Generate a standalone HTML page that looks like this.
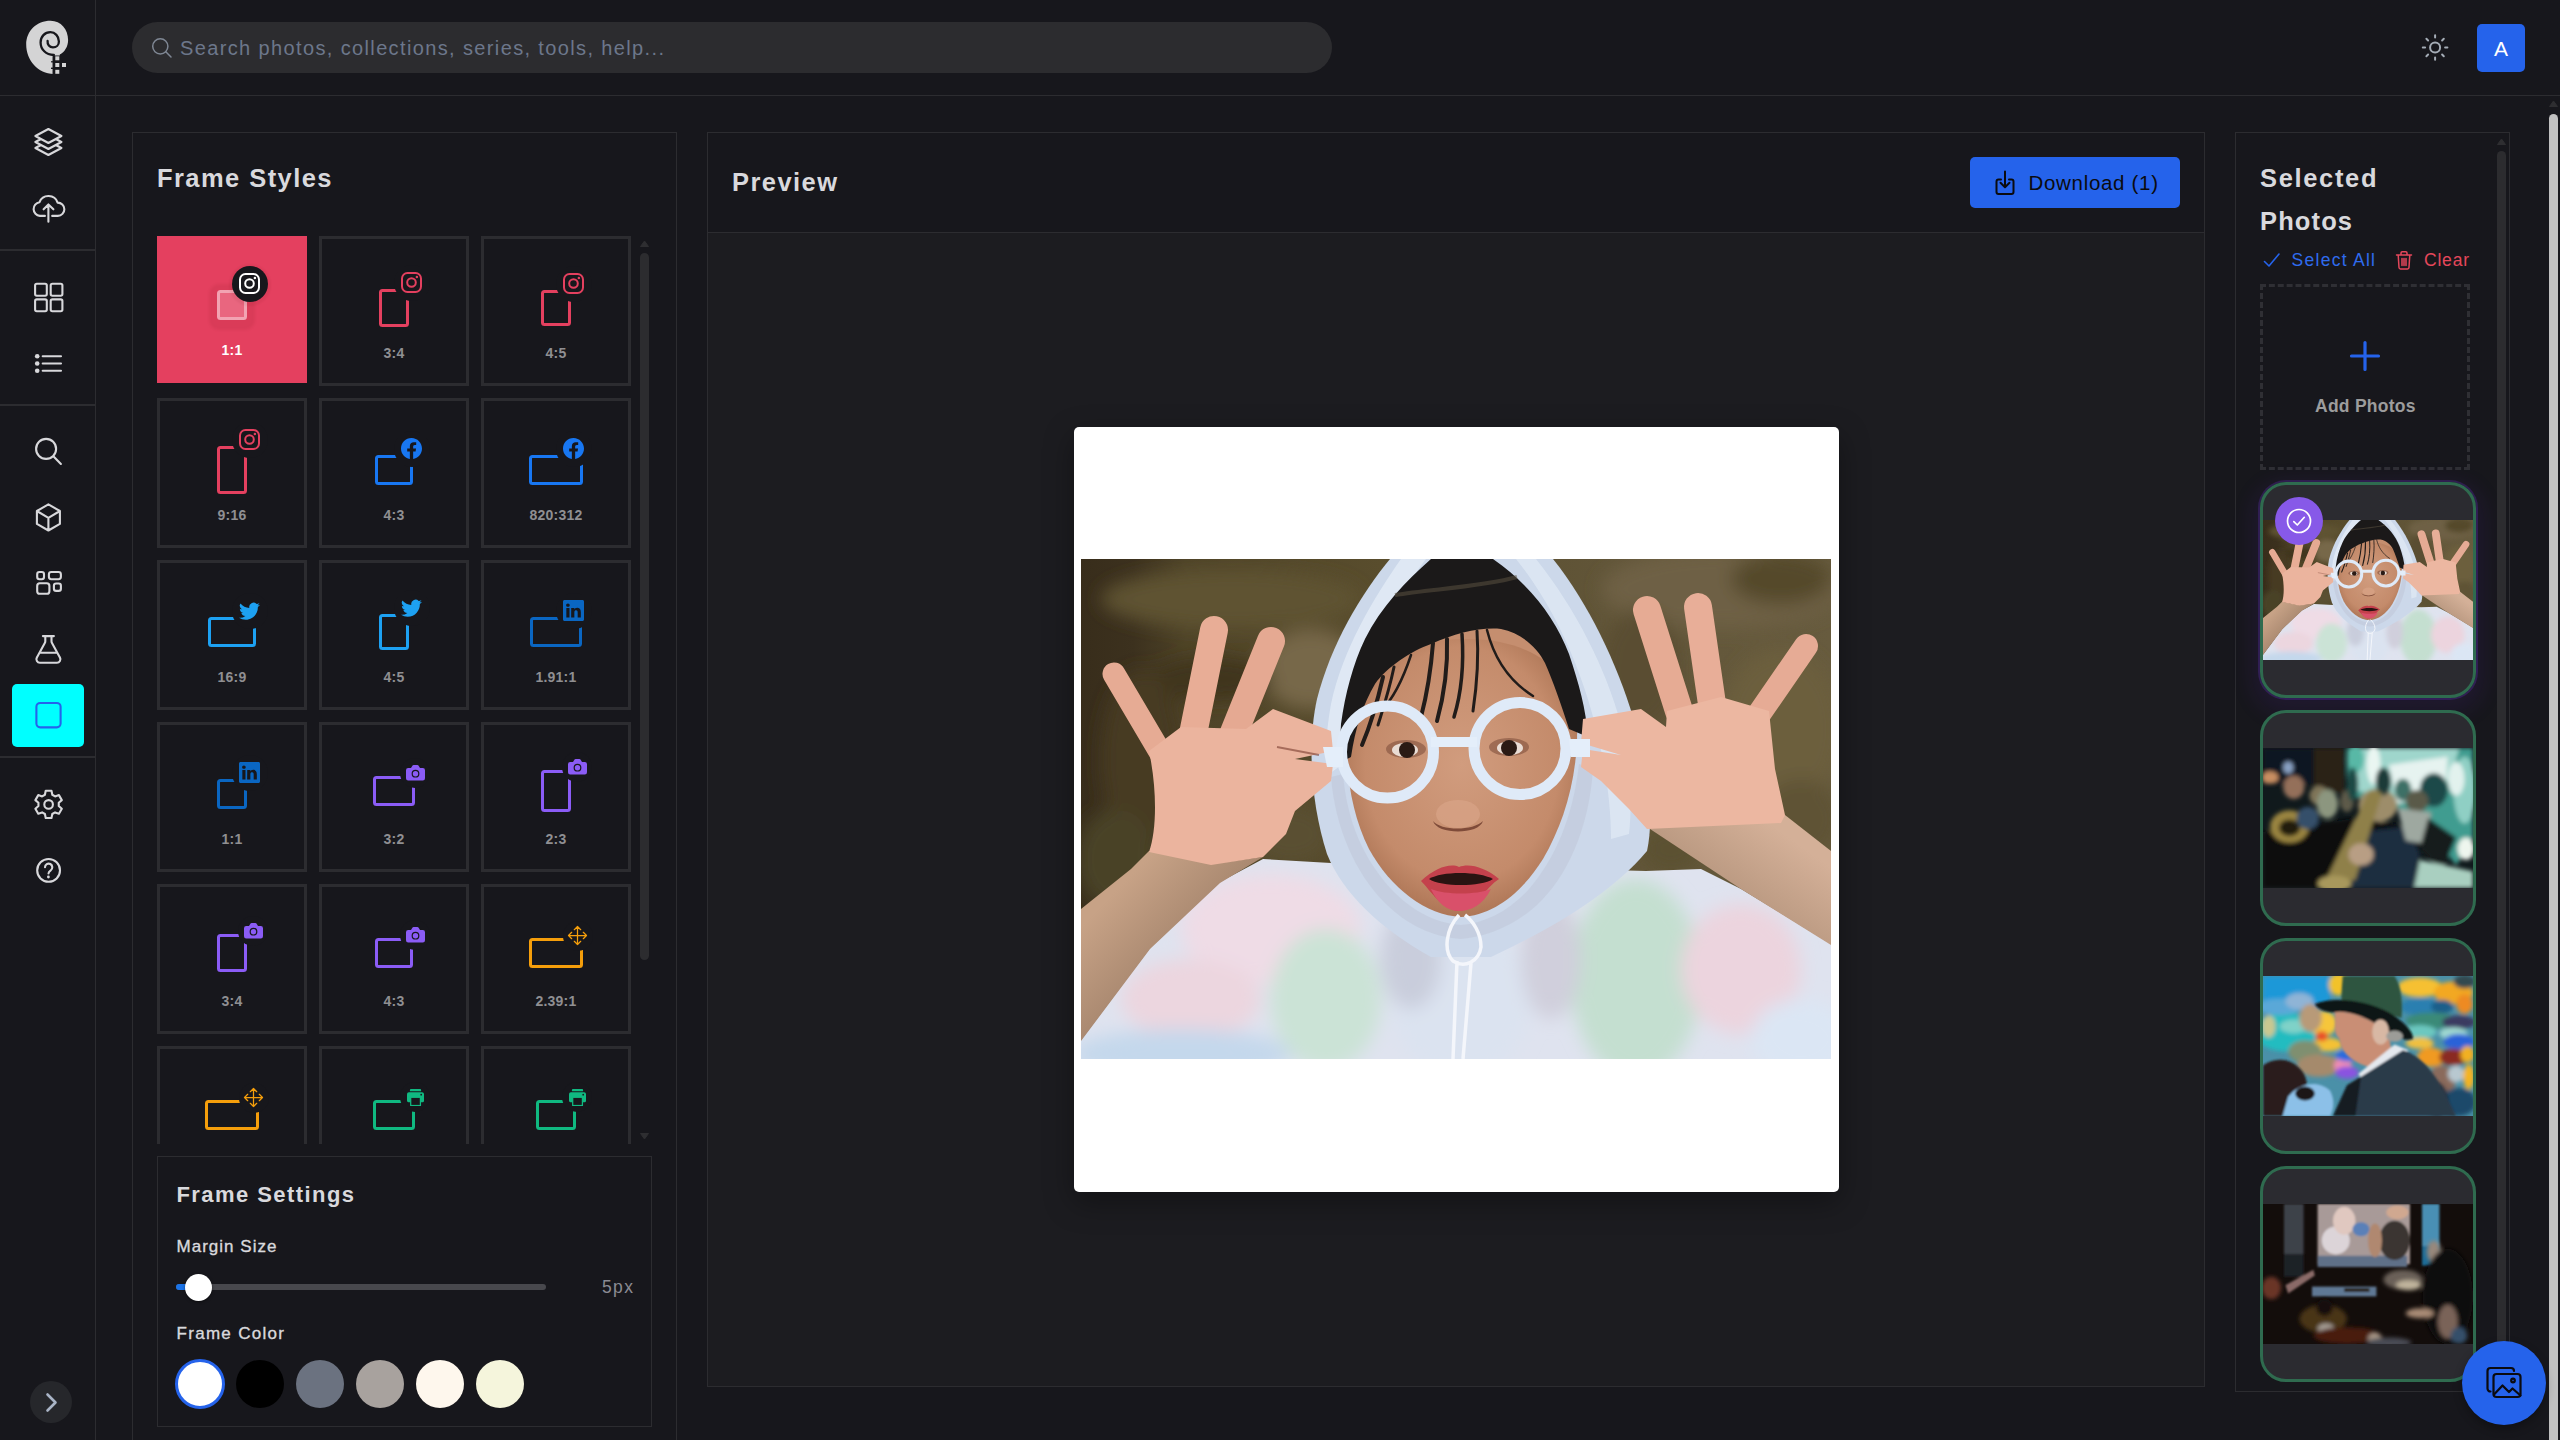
<!DOCTYPE html>
<html lang="en"><head><meta charset="utf-8"><title>Frame Styles</title><meta name="viewport" content="width=device-width, initial-scale=1"><style>
*{box-sizing:border-box;margin:0;padding:0}
html,body{width:2560px;height:1440px;overflow:hidden;background:#17171c}
body{font-family:"Liberation Sans",sans-serif;position:relative}
@media (max-width:1600px){html{zoom:.5}}
#root{position:absolute;left:0;top:0;width:2560px;height:1440px;overflow:hidden;background:#17171c}
#root div,#root svg,#root span{position:absolute}
.t{white-space:nowrap}
.ic{overflow:visible}
.ln{background:#2c2c30}
.cell{width:150px;height:150px;border:3px solid #2c2c30}
.lab{width:150px;text-align:center;font-weight:700;font-size:14px;line-height:20px;color:#8f8f92;left:0;letter-spacing:.2px}
.box{border:1px solid #2c2c30}
.sw{width:48px;height:48px;border-radius:50%}
.card{width:216px;height:216px;border:3px solid #2f6b4f;border-radius:26px;background:#2b2b30;overflow:hidden}
</style></head><body><div id="root">
<div class="ln" style="left:95px;top:0;width:1px;height:1440px"></div>
<div class="ln" style="left:0;top:95px;width:2560px;height:1px"></div>
<div class="ln" style="left:0;top:249px;width:96px;height:2px"></div>
<div class="ln" style="left:0;top:404px;width:96px;height:2px"></div>
<div class="ln" style="left:0;top:756px;width:96px;height:2px"></div>
<svg class="ic" style="left:0;top:0" width="96" height="95" viewBox="0 0 96 95">
<path d="M53.700 74 C38 73.500 26.200 60.500 26.200 44.500 C26.200 31 36.600 20.700 50.600 20.700 C61 20.700 68.100 29.500 68.100 40 C68.100 46.800 64.600 52 59.800 54.600 L59.800 55.500 H53.700Z" fill="#d4d4d5"/>
<path d="M47.600 40.800 C47.200 44.500 49.500 47.400 53 47.400 C56.400 47.400 58.900 44.800 58.900 41.400 C58.900 36.300 55 32.200 50.400 32.200 C44.800 32.200 40.600 36.600 40.600 42.400 C40.600 49.500 46 54.800 53.700 55 V74" fill="none" stroke="#17171c" stroke-width="2.300" stroke-linecap="round"/>
<g fill="#d4d4d5"><rect x="55.300" y="56.300" width="4" height="4"/><rect x="55.300" y="63" width="4" height="4"/><rect x="62" y="63" width="4" height="4"/><rect x="55.300" y="69.800" width="4" height="4"/></g>
<g fill="#17171c"><rect x="51" y="61.200" width="2.700" height="1.200"/><rect x="51" y="67.600" width="2.700" height="1.400"/></g>
</svg>
<div style="left:12px;top:684px;width:72px;height:63px;border-radius:5px;background:#00ffff"></div>
<svg class="ic" style="left:0;top:96px" width="96" height="1344" viewBox="0 96 96 1344" fill="none" stroke="#d8d8db" stroke-width="2.100" stroke-linecap="round" stroke-linejoin="round">
<g transform="translate(32.400 126) scale(1.3333)" stroke-width="1.600"><path d="M6.429 9.750 2.250 12l4.179 2.250m0-4.500 5.571 3 5.571-3m-11.142 0L2.250 7.500 12 2.250l9.750 5.250-4.179 2.250m0 0L21.750 12l-4.179 2.250m0 0 4.179 2.250L12 21.750 2.250 16.500l4.179-2.250m11.142 0-5.571 3-5.571-3"/></g>
<path d="M44.900 215.900 H39.900 A6.900 6.900 0 0 1 39.500 202.200 A9.600 9.600 0 0 1 57.600 202.600 A6.600 6.600 0 0 1 57.800 215.900 H52.200 M48.400 221.700 V204.500 M43.600 209.300 L48.400 204.500 L53.400 209.300"/>
<rect x="35.100" y="283.800" width="11.700" height="11.900" rx="1.700"/><rect x="50.700" y="283.800" width="11.700" height="11.900" rx="1.700"/>
<rect x="35.100" y="299.400" width="11.700" height="11.900" rx="1.700"/><rect x="50.700" y="299.400" width="11.700" height="11.900" rx="1.700"/>
<path d="M42.700 356.250 H61 M42.700 363.500 H61 M42.700 370.700 H61"/>
<g fill="#d8d8db" stroke="none"><circle cx="37.200" cy="356.250" r="2.300"/><circle cx="37.200" cy="363.500" r="2.300"/><circle cx="37.200" cy="370.700" r="2.300"/></g>
<circle cx="46.100" cy="448.900" r="10"/><path d="M53.600 456.500 L60.900 463.900"/>
<path d="M48.400 504.300 L59.900 511 V523.900 L48.400 530.500 L36.900 523.900 V511 Z M36.900 511 L48.400 517.800 L59.900 511 M48.400 517.800 V530.500"/>
<rect x="37.200" y="572" width="6.800" height="7.200" rx="2.200"/><rect x="48.900" y="572" width="12" height="7.200" rx="2.400"/>
<rect x="37.200" y="583.300" width="12.200" height="10.500" rx="2.600"/><rect x="53.900" y="583.500" width="7" height="7.400" rx="2.200"/>
<path d="M45.300 636.100 V641.300 a3.200 3.200 0 0 1 -.5 1.700 L36.900 657.400 A3.500 3.500 0 0 0 40 662.700 H56.800 A3.500 3.500 0 0 0 59.900 657.400 L52 643 a3.200 3.200 0 0 1 -.5 -1.700 V636.100 M42.900 636.100 H53.900 M40.300 652.700 H56.500"/>
<rect x="36.400" y="703" width="24.200" height="24.400" rx="3.800" stroke="#2563eb"/>
<path d="M44.91 794.78 L45.71 790.80 L51.49 790.80 L52.29 794.78 L55.08 796.40 L58.93 795.10 L61.82 800.10 L58.77 802.79 L58.77 806.01 L61.82 808.70 L58.93 813.70 L55.08 812.40 L52.29 814.02 L51.49 818.00 L45.71 818.00 L44.91 814.02 L42.12 812.40 L38.27 813.70 L35.38 808.70 L38.43 806.01 L38.43 802.79 L35.38 800.10 L38.27 795.10 L42.12 796.40Z"/><circle cx="48.600" cy="804.400" r="4.300"/>
<circle cx="48.600" cy="870.400" r="11.400"/><path d="M45 867.300 a3.650 3.650 0 1 1 5.700 3 c-1.400 .900 -2.200 1.700 -2.200 3.200"/><circle cx="48.400" cy="877" r="1.400" fill="#d8d8db" stroke="none"/>
</svg>
<div style="left:30px;top:1381px;width:42px;height:42px;border-radius:50%;background:#26272b"></div>
<svg class="ic" style="left:30px;top:1381px" width="42" height="42" viewBox="0 0 42 42" fill="none" stroke="#a9b4c6" stroke-width="2.600" stroke-linecap="round" stroke-linejoin="round"><polyline points="17.500 13.500 25.500 21.500 17.500 29.500"/></svg>
<div style="left:132px;top:22px;width:1200px;height:51px;border-radius:25.500px;background:#2c2c2f"></div>
<svg class="ic" style="left:150px;top:36px" width="24" height="24" viewBox="0 0 24 24" fill="none" stroke="#7f8794" stroke-width="1.500" stroke-linecap="round"><circle cx="10.300" cy="10.300" r="7.600"/><line x1="15.800" y1="15.800" x2="21" y2="21"/></svg>
<div class="t " style="left:180.0px;top:32.6px;font-size:20px;line-height:30px;letter-spacing:1.37px;color:#6c778b;font-weight:400;">Search photos, collections, series, tools, help...</div>
<svg class="ic" style="left:2420px;top:32px" width="30" height="30" viewBox="0 0 30 30" fill="none" stroke="#a4acb6" stroke-width="2" stroke-linecap="round">
<circle cx="15.100" cy="15.500" r="5"/><path d="M15.100 3.200v2.300M15.100 25.500v2.300M2.800 15.500h2.300M25.100 15.500h2.300M6.400 6.800l1.700 1.700M22.100 22.500l1.700 1.700M6.400 24.200l1.700-1.700M22.100 8.500l1.700-1.700"/></svg>
<div style="left:2477px;top:24px;width:48px;height:48px;border-radius:5px;background:#2563eb"></div>
<div class="t" style="left:2477px;top:24px;width:48px;height:48px;line-height:49px;text-align:center;font-size:21px;color:#fff">A</div>
<svg class="ic" style="left:2549px;top:100px" width="9" height="8" viewBox="0 0 9 8"><path d="M4.500 1 L8.500 6.500 H.500Z" fill="#2e2e31" stroke="#2e2e31" stroke-width="1" stroke-linejoin="round"/></svg>
<div style="left:2549px;top:114px;width:9px;height:1340px;border-radius:4.500px;background:#c1c1c1"></div>
<div class="box" style="left:132px;top:132px;width:545px;height:1400px"></div>
<div class="t " style="left:157.0px;top:159.2px;font-size:25.5px;line-height:38px;letter-spacing:1.43px;color:#d9d9dd;font-weight:700;">Frame Styles</div>
<div style="left:157px;top:236px;width:500px;height:908px;overflow:hidden">
<div class="cell" style="left:162px;top:0px"></div><div style="left:222.0px;top:53.0px;width:30px;height:38px;border:3px solid #e4405f;border-radius:3.5px"></div><div style="left:236.5px;top:28.5px;width:36px;height:36px;border-radius:50%;background:#17171c"></div><div style="left:244.0px;top:36.0px;width:21px;height:21px"><svg width="21" height="21" viewBox="0 0 21 21" fill="none" stroke="#e4405f" stroke-width="2"><rect x="1" y="1" width="19" height="19" rx="5.500"/><circle cx="10.500" cy="10.500" r="4.300"/><circle cx="15.900" cy="5.100" r="1.250" fill="#e4405f" stroke="none"/></svg></div><div class="t lab" style="left:162px;top:107px">3:4</div>
<div class="cell" style="left:324px;top:0px"></div><div style="left:384.0px;top:54.0px;width:30px;height:36px;border:3px solid #e4405f;border-radius:3.5px"></div><div style="left:398.5px;top:29.5px;width:36px;height:36px;border-radius:50%;background:#17171c"></div><div style="left:406.0px;top:37.0px;width:21px;height:21px"><svg width="21" height="21" viewBox="0 0 21 21" fill="none" stroke="#e4405f" stroke-width="2"><rect x="1" y="1" width="19" height="19" rx="5.500"/><circle cx="10.500" cy="10.500" r="4.300"/><circle cx="15.900" cy="5.100" r="1.250" fill="#e4405f" stroke="none"/></svg></div><div class="t lab" style="left:324px;top:107px">4:5</div>
<div class="cell" style="left:0px;top:162px"></div><div style="left:60.0px;top:210.0px;width:30px;height:48px;border:3px solid #e4405f;border-radius:3.5px"></div><div style="left:74.5px;top:185.5px;width:36px;height:36px;border-radius:50%;background:#17171c"></div><div style="left:82.0px;top:193.0px;width:21px;height:21px"><svg width="21" height="21" viewBox="0 0 21 21" fill="none" stroke="#e4405f" stroke-width="2"><rect x="1" y="1" width="19" height="19" rx="5.500"/><circle cx="10.500" cy="10.500" r="4.300"/><circle cx="15.900" cy="5.100" r="1.250" fill="#e4405f" stroke="none"/></svg></div><div class="t lab" style="left:0px;top:269px">9:16</div>
<div class="cell" style="left:162px;top:162px"></div><div style="left:218.0px;top:219.0px;width:38px;height:30px;border:3px solid #1877f2;border-radius:3.5px"></div><div style="left:236.5px;top:194.5px;width:36px;height:36px;border-radius:50%;background:#17171c"></div><div style="left:244.0px;top:202.0px;width:21px;height:21px"><svg width="21" height="21" viewBox="0 0 16 16" fill="#1877f2"><path d="M16 8.049c0-4.446-3.582-8.050-8-8.050C3.580 0-.002 3.603-.002 8.050c0 4.017 2.926 7.347 6.750 7.951v-5.625h-2.030V8.050H6.750V6.275c0-2.017 1.195-3.131 3.022-3.131.876 0 1.791.157 1.791.157v1.980h-1.009c-.993 0-1.303.621-1.303 1.258v1.510h2.218l-.354 2.326H9.250V16c3.824-.604 6.750-3.934 6.750-7.951z"/></svg></div><div class="t lab" style="left:162px;top:269px">4:3</div>
<div class="cell" style="left:324px;top:162px"></div><div style="left:372.0px;top:219.0px;width:54px;height:30px;border:3px solid #1877f2;border-radius:3.5px"></div><div style="left:398.5px;top:194.5px;width:36px;height:36px;border-radius:50%;background:#17171c"></div><div style="left:406.0px;top:202.0px;width:21px;height:21px"><svg width="21" height="21" viewBox="0 0 16 16" fill="#1877f2"><path d="M16 8.049c0-4.446-3.582-8.050-8-8.050C3.580 0-.002 3.603-.002 8.050c0 4.017 2.926 7.347 6.750 7.951v-5.625h-2.030V8.050H6.750V6.275c0-2.017 1.195-3.131 3.022-3.131.876 0 1.791.157 1.791.157v1.980h-1.009c-.993 0-1.303.621-1.303 1.258v1.510h2.218l-.354 2.326H9.250V16c3.824-.604 6.750-3.934 6.750-7.951z"/></svg></div><div class="t lab" style="left:324px;top:269px">820:312</div>
<div class="cell" style="left:0px;top:324px"></div><div style="left:51.0px;top:381.0px;width:48px;height:30px;border:3px solid #1da1f2;border-radius:3.5px"></div><div style="left:74.5px;top:356.5px;width:36px;height:36px;border-radius:50%;background:#17171c"></div><div style="left:82.0px;top:364.0px;width:21px;height:21px"><svg width="21" height="21" viewBox="0 0 16 16" fill="#1da1f2"><path d="M5.026 15c6.038 0 9.341-5.003 9.341-9.334 0-.140 0-.282-.006-.422A6.685 6.685 0 0 0 16 3.542a6.658 6.658 0 0 1-1.889.518 3.301 3.301 0 0 0 1.447-1.817 6.533 6.533 0 0 1-2.087.793A3.286 3.286 0 0 0 7.875 6.030a9.325 9.325 0 0 1-6.767-3.429 3.289 3.289 0 0 0 1.018 4.382A3.323 3.323 0 0 1 .640 6.575v.045a3.288 3.288 0 0 0 2.632 3.218 3.203 3.203 0 0 1-.865.115 3.230 3.230 0 0 1-.614-.057 3.283 3.283 0 0 0 3.067 2.277A6.588 6.588 0 0 1 .780 13.580a6.320 6.320 0 0 1-.780-.045A9.344 9.344 0 0 0 5.026 15z"/></svg></div><div class="t lab" style="left:0px;top:431px">16:9</div>
<div class="cell" style="left:162px;top:324px"></div><div style="left:222.0px;top:378.0px;width:30px;height:36px;border:3px solid #1da1f2;border-radius:3.5px"></div><div style="left:236.5px;top:353.5px;width:36px;height:36px;border-radius:50%;background:#17171c"></div><div style="left:244.0px;top:361.0px;width:21px;height:21px"><svg width="21" height="21" viewBox="0 0 16 16" fill="#1da1f2"><path d="M5.026 15c6.038 0 9.341-5.003 9.341-9.334 0-.140 0-.282-.006-.422A6.685 6.685 0 0 0 16 3.542a6.658 6.658 0 0 1-1.889.518 3.301 3.301 0 0 0 1.447-1.817 6.533 6.533 0 0 1-2.087.793A3.286 3.286 0 0 0 7.875 6.030a9.325 9.325 0 0 1-6.767-3.429 3.289 3.289 0 0 0 1.018 4.382A3.323 3.323 0 0 1 .640 6.575v.045a3.288 3.288 0 0 0 2.632 3.218 3.203 3.203 0 0 1-.865.115 3.230 3.230 0 0 1-.614-.057 3.283 3.283 0 0 0 3.067 2.277A6.588 6.588 0 0 1 .780 13.580a6.320 6.320 0 0 1-.780-.045A9.344 9.344 0 0 0 5.026 15z"/></svg></div><div class="t lab" style="left:162px;top:431px">4:5</div>
<div class="cell" style="left:324px;top:324px"></div><div style="left:373.0px;top:381.0px;width:52px;height:30px;border:3px solid #0a66c2;border-radius:3.5px"></div><div style="left:398.5px;top:356.5px;width:36px;height:36px;border-radius:50%;background:#17171c"></div><div style="left:406.0px;top:364.0px;width:21px;height:21px"><svg width="21" height="21" viewBox="0 0 16 16" fill="#0a66c2"><path d="M0 1.146C0 .513.526 0 1.175 0h13.650C15.474 0 16 .513 16 1.146v13.708c0 .633-.526 1.146-1.175 1.146H1.175C.526 16 0 15.487 0 14.854V1.146zm4.943 12.248V6.169H2.542v7.225h2.401zm-1.200-8.212c.837 0 1.358-.554 1.358-1.248-.015-.709-.520-1.248-1.342-1.248-.822 0-1.359.540-1.359 1.248 0 .694.521 1.248 1.327 1.248h.016zm4.908 8.212V9.359c0-.216.016-.432.080-.586.173-.431.568-.878 1.232-.878.869 0 1.216.662 1.216 1.634v3.865h2.401V9.250c0-2.220-1.184-3.252-2.764-3.252-1.274 0-1.845.700-2.165 1.193v.025h-.016a5.540 5.540 0 0 1 .016-.025V6.169h-2.400c.030.678 0 7.225 0 7.225h2.400z"/></svg></div><div class="t lab" style="left:324px;top:431px">1.91:1</div>
<div class="cell" style="left:0px;top:486px"></div><div style="left:60.0px;top:543.0px;width:30px;height:30px;border:3px solid #0a66c2;border-radius:3.5px"></div><div style="left:74.5px;top:518.5px;width:36px;height:36px;border-radius:50%;background:#17171c"></div><div style="left:82.0px;top:526.0px;width:21px;height:21px"><svg width="21" height="21" viewBox="0 0 16 16" fill="#0a66c2"><path d="M0 1.146C0 .513.526 0 1.175 0h13.650C15.474 0 16 .513 16 1.146v13.708c0 .633-.526 1.146-1.175 1.146H1.175C.526 16 0 15.487 0 14.854V1.146zm4.943 12.248V6.169H2.542v7.225h2.401zm-1.200-8.212c.837 0 1.358-.554 1.358-1.248-.015-.709-.520-1.248-1.342-1.248-.822 0-1.359.540-1.359 1.248 0 .694.521 1.248 1.327 1.248h.016zm4.908 8.212V9.359c0-.216.016-.432.080-.586.173-.431.568-.878 1.232-.878.869 0 1.216.662 1.216 1.634v3.865h2.401V9.250c0-2.220-1.184-3.252-2.764-3.252-1.274 0-1.845.700-2.165 1.193v.025h-.016a5.540 5.540 0 0 1 .016-.025V6.169h-2.400c.030.678 0 7.225 0 7.225h2.400z"/></svg></div><div class="t lab" style="left:0px;top:593px">1:1</div>
<div class="cell" style="left:162px;top:486px"></div><div style="left:216.0px;top:540.0px;width:42px;height:30px;border:3px solid #8b5cf6;border-radius:3.5px"></div><div style="left:243.3px;top:522.3px;width:30px;height:30px;border-radius:50%;background:#17171c"></div><div style="left:248.8px;top:529.3px;width:19px;height:16px"><svg width="19" height="16" viewBox="0 0 19 16"><path fill="#8b5cf6" d="M2.200 3 H5 L6.200 .900 Q6.700 0 7.700 0 H11.300 Q12.300 0 12.800 .900 L14 3 H16.800 Q19 3 19 5.200 V13.300 Q19 15.500 16.800 15.500 H2.200 Q0 15.500 0 13.300 V5.200 Q0 3 2.200 3Z"/><circle cx="9.500" cy="8.700" r="3.300" fill="none" stroke="#17171c" stroke-width="1.200"/></svg></div><div class="t lab" style="left:162px;top:593px">3:2</div>
<div class="cell" style="left:324px;top:486px"></div><div style="left:384.0px;top:534.0px;width:30px;height:42px;border:3px solid #8b5cf6;border-radius:3.5px"></div><div style="left:405.3px;top:516.3px;width:30px;height:30px;border-radius:50%;background:#17171c"></div><div style="left:410.8px;top:523.3px;width:19px;height:16px"><svg width="19" height="16" viewBox="0 0 19 16"><path fill="#8b5cf6" d="M2.200 3 H5 L6.200 .900 Q6.700 0 7.700 0 H11.300 Q12.300 0 12.800 .900 L14 3 H16.800 Q19 3 19 5.200 V13.300 Q19 15.500 16.800 15.500 H2.200 Q0 15.500 0 13.300 V5.200 Q0 3 2.200 3Z"/><circle cx="9.500" cy="8.700" r="3.300" fill="none" stroke="#17171c" stroke-width="1.200"/></svg></div><div class="t lab" style="left:324px;top:593px">2:3</div>
<div class="cell" style="left:0px;top:648px"></div><div style="left:60.0px;top:698.0px;width:30px;height:38px;border:3px solid #8b5cf6;border-radius:3.5px"></div><div style="left:81.3px;top:680.3px;width:30px;height:30px;border-radius:50%;background:#17171c"></div><div style="left:86.8px;top:687.3px;width:19px;height:16px"><svg width="19" height="16" viewBox="0 0 19 16"><path fill="#8b5cf6" d="M2.200 3 H5 L6.200 .900 Q6.700 0 7.700 0 H11.300 Q12.300 0 12.800 .900 L14 3 H16.800 Q19 3 19 5.200 V13.300 Q19 15.500 16.800 15.500 H2.200 Q0 15.500 0 13.300 V5.200 Q0 3 2.200 3Z"/><circle cx="9.500" cy="8.700" r="3.300" fill="none" stroke="#17171c" stroke-width="1.200"/></svg></div><div class="t lab" style="left:0px;top:755px">3:4</div>
<div class="cell" style="left:162px;top:648px"></div><div style="left:218.0px;top:702.0px;width:38px;height:30px;border:3px solid #8b5cf6;border-radius:3.5px"></div><div style="left:243.3px;top:684.3px;width:30px;height:30px;border-radius:50%;background:#17171c"></div><div style="left:248.8px;top:691.3px;width:19px;height:16px"><svg width="19" height="16" viewBox="0 0 19 16"><path fill="#8b5cf6" d="M2.200 3 H5 L6.200 .900 Q6.700 0 7.700 0 H11.300 Q12.300 0 12.800 .900 L14 3 H16.800 Q19 3 19 5.200 V13.300 Q19 15.500 16.800 15.500 H2.200 Q0 15.500 0 13.300 V5.200 Q0 3 2.200 3Z"/><circle cx="9.500" cy="8.700" r="3.300" fill="none" stroke="#17171c" stroke-width="1.200"/></svg></div><div class="t lab" style="left:162px;top:755px">4:3</div>
<div class="cell" style="left:324px;top:648px"></div><div style="left:372.0px;top:702.0px;width:54px;height:30px;border:3px solid #f59e0b;border-radius:3.5px"></div><div style="left:405.5px;top:684.5px;width:30px;height:30px;border-radius:50%;background:#17171c"></div><div style="left:410.0px;top:689.0px;width:21px;height:21px"><svg width="21" height="21" viewBox="0 0 21 21" fill="none" stroke="#f59e0b" stroke-width="1.250" stroke-linecap="round" stroke-linejoin="round"><path d="M10.500 1.500V19.500M1.500 10.500H19.500M7.300 4.700 10.500 1.500 13.700 4.700M7.300 16.300 10.500 19.500 13.700 16.300M4.700 7.300 1.500 10.500 4.700 13.700M16.300 7.300 19.500 10.500 16.300 13.700"/></svg></div><div class="t lab" style="left:324px;top:755px">2.39:1</div>
<div class="cell" style="left:0px;top:810px"></div><div style="left:48.0px;top:864.0px;width:54px;height:30px;border:3px solid #f59e0b;border-radius:3.5px"></div><div style="left:81.5px;top:846.5px;width:30px;height:30px;border-radius:50%;background:#17171c"></div><div style="left:86.0px;top:851.0px;width:21px;height:21px"><svg width="21" height="21" viewBox="0 0 21 21" fill="none" stroke="#f59e0b" stroke-width="1.250" stroke-linecap="round" stroke-linejoin="round"><path d="M10.500 1.500V19.500M1.500 10.500H19.500M7.300 4.700 10.500 1.500 13.700 4.700M7.300 16.300 10.500 19.500 13.700 16.300M4.700 7.300 1.500 10.500 4.700 13.700M16.300 7.300 19.500 10.500 16.300 13.700"/></svg></div>
<div class="cell" style="left:162px;top:810px"></div><div style="left:216.0px;top:864.0px;width:42px;height:30px;border:3px solid #10b981;border-radius:3.5px"></div><div style="left:243.3px;top:846.3px;width:30px;height:30px;border-radius:50%;background:#17171c"></div><div style="left:249.8px;top:852.8px;width:17px;height:17px"><svg width="17.500" height="17.500" viewBox="0 0 18 18"><path fill="#10b981" d="M4 0 H13.500 Q14.500 0 14.500 1 V2.300 H3 V1 Q3 0 4 0Z"/><path fill="#10b981" d="M2 3.300 H15.500 Q17.500 3.300 17.500 5.300 V12 Q17.500 13.500 16 13.500 H1.500 Q0 13.500 0 12 V5.300 Q0 3.300 2 3.300Z"/><rect x="3.800" y="8.500" width="10" height="8.500" fill="#17171c" stroke="#10b981" stroke-width="1.300"/><circle cx="14.600" cy="5.900" r=".900" fill="#17171c"/></svg></div>
<div class="cell" style="left:324px;top:810px"></div><div style="left:379.0px;top:864.0px;width:40px;height:30px;border:3px solid #10b981;border-radius:3.5px"></div><div style="left:405.3px;top:846.3px;width:30px;height:30px;border-radius:50%;background:#17171c"></div><div style="left:411.8px;top:852.8px;width:17px;height:17px"><svg width="17.500" height="17.500" viewBox="0 0 18 18"><path fill="#10b981" d="M4 0 H13.500 Q14.500 0 14.500 1 V2.300 H3 V1 Q3 0 4 0Z"/><path fill="#10b981" d="M2 3.300 H15.500 Q17.500 3.300 17.500 5.300 V12 Q17.500 13.500 16 13.500 H1.500 Q0 13.500 0 12 V5.300 Q0 3.300 2 3.300Z"/><rect x="3.800" y="8.500" width="10" height="8.500" fill="#17171c" stroke="#10b981" stroke-width="1.300"/><circle cx="14.600" cy="5.900" r=".900" fill="#17171c"/></svg></div>
<div style="left:0;top:0;width:150px;height:147px;background:#e4405f"></div><div style="left:60px;top:54px;width:30px;height:30px;border:3px solid rgba(255,255,255,.4);border-radius:3.500px;background:rgba(255,255,255,.2);box-shadow:0 2px 3px 8px rgba(90,0,20,.075)"></div><div style="left:74.500px;top:29.500px;width:36px;height:36px;border-radius:50%;background:#17171c;box-shadow:0 1px 2px 3px rgba(90,0,20,.06)"></div><div style="left:82px;top:37px;width:21px;height:21px"><svg width="21" height="21" viewBox="0 0 21 21" fill="none" stroke="#ffffff" stroke-width="2"><rect x="1" y="1" width="19" height="19" rx="5.500"/><circle cx="10.500" cy="10.500" r="4.300"/><circle cx="15.900" cy="5.100" r="1.250" fill="#ffffff" stroke="none"/></svg></div><div class="t lab" style="left:0;top:104px;color:#fff">1:1</div>
</div>
<svg class="ic" style="left:640px;top:240px" width="9" height="8" viewBox="0 0 9 8"><path d="M4.500 1 L8.500 6.500 H.500Z" fill="#2e2e31" stroke="#2e2e31" stroke-width="1" stroke-linejoin="round"/></svg>
<div style="left:640px;top:253px;width:9px;height:707px;border-radius:4.500px;background:#2c2c2f"></div>
<svg class="ic" style="left:640px;top:1132px" width="9" height="8" viewBox="0 0 9 8"><path d="M4.500 7 L8.500 1.500 H.500Z" fill="#2e2e31" stroke="#2e2e31" stroke-width="1" stroke-linejoin="round"/></svg>
<div class="box" style="left:157px;top:1156px;width:495px;height:271px"></div>
<div class="t " style="left:176.5px;top:1177.9px;font-size:22px;line-height:33px;letter-spacing:1.43px;color:#d9d9dd;font-weight:700;">Frame Settings</div>
<div class="t " style="left:176.5px;top:1234.1px;font-size:17px;line-height:26px;letter-spacing:1.02px;color:#d9d9dd;font-weight:400;-webkit-text-stroke:.35px #d9d9dd;">Margin Size</div>
<div style="left:176px;top:1284px;width:370px;height:6px;border-radius:3px;background:#48484d"></div>
<div style="left:176px;top:1284px;width:20px;height:6px;border-radius:3px;background:#1a73e8"></div>
<div style="left:184.500px;top:1273.500px;width:27px;height:27px;border-radius:50%;background:#fff;box-shadow:0 1px 3px rgba(0,0,0,.5)"></div>
<div class="t " style="left:602.0px;top:1273.9px;font-size:17.5px;line-height:26px;letter-spacing:1.39px;color:#8b8b93;font-weight:400;">5px</div>
<div class="t " style="left:176.5px;top:1321.1px;font-size:17px;line-height:26px;letter-spacing:1.30px;color:#d9d9dd;font-weight:400;-webkit-text-stroke:.35px #d9d9dd;">Frame Color</div>
<div class="sw" style="left:175px;top:1359px;width:50px;height:50px;background:#ffffff;border:3px solid #2563eb"></div>
<div class="sw" style="left:236px;top:1360px;background:#000000"></div>
<div class="sw" style="left:296px;top:1360px;background:#6b7280"></div>
<div class="sw" style="left:356px;top:1360px;background:#a8a29e"></div>
<div class="sw" style="left:416px;top:1360px;background:#fef7ed"></div>
<div class="sw" style="left:476px;top:1360px;background:#f5f5dc"></div>
<div style="left:708px;top:233px;width:1496px;height:1153px;background:#1c1c20"></div>
<div class="box" style="left:707px;top:132px;width:1498px;height:1255px"></div>
<div class="ln" style="left:708px;top:232px;width:1496px;height:1px"></div>
<div class="t " style="left:732.0px;top:163.2px;font-size:25.5px;line-height:38px;letter-spacing:1.43px;color:#d9d9dd;font-weight:700;">Preview</div>
<div style="left:1970px;top:157px;width:210px;height:51px;border-radius:5px;background:#2563eb"></div>
<svg class="ic" style="left:1992px;top:168px" width="26" height="30" viewBox="0 0 26 30" fill="none" stroke="#0b0b0f" stroke-width="2" stroke-linecap="round" stroke-linejoin="round">
<path d="M9 11.500H6.500a2 2 0 0 0-2 2V24a2 2 0 0 0 2 2H19.500a2 2 0 0 0 2-2V13.500a2 2 0 0 0-2-2H17"/><path d="M13 3.500V19M8.500 14.800 13 19.300 17.500 14.800"/></svg>
<div class="t " style="left:2028.5px;top:167.4px;font-size:20.5px;line-height:31px;letter-spacing:0.69px;color:#0b0b0f;font-weight:400;">Download (1)</div>
<div style="left:1074px;top:427px;width:765px;height:765px;border-radius:5px;background:#fff;box-shadow:0 10px 30px rgba(0,0,0,.35)"></div>
<div id="photo" style="left:1081px;top:559px;width:750px;height:500px;overflow:hidden;background:#6a5a3c"><svg width="750" height="500" viewBox="0 0 750 500" preserveAspectRatio="none">
<defs>
<linearGradient id="p0bg" x1="0" x2="1" y1="0" y2="0"><stop offset="0" stop-color="#382d1b"/><stop offset=".07" stop-color="#3c311e"/><stop offset=".14" stop-color="#4e4327"/><stop offset=".4" stop-color="#594d2d"/><stop offset=".7" stop-color="#615538"/><stop offset="1" stop-color="#675b3e"/></linearGradient>
<filter id="p0b8" x="-20%" y="-20%" width="140%" height="140%"><feGaussianBlur stdDeviation="9"/></filter>
<filter id="p0b3" x="-20%" y="-20%" width="140%" height="140%"><feGaussianBlur stdDeviation="3"/></filter>
<filter id="p0b1" x="-10%" y="-10%" width="120%" height="120%"><feGaussianBlur stdDeviation="1.2"/></filter>
<radialGradient id="p0face" cx=".5" cy=".45" r=".6"><stop offset="0" stop-color="#d19c7e"/><stop offset=".7" stop-color="#c48b6b"/><stop offset="1" stop-color="#a56e4e"/></radialGradient>
<linearGradient id="p0hand" x1="0" x2="0" y1="0" y2="1"><stop offset="0" stop-color="#dca98d"/><stop offset="1" stop-color="#e3b69c"/></linearGradient>
<clipPath id="p0coat"><path d="M0 481 L69 389 L139 323 L182 300 L250 304 L565 312 L620 310 L660 330 L750 385 V500 H0Z"/></clipPath>
<linearGradient id="p0armL" x1="0" y1="0" x2="1" y2="1"><stop offset=".2" stop-color="#c7a286"/><stop offset=".55" stop-color="#a5856d"/><stop offset=".8" stop-color="#7d6a57"/></linearGradient><linearGradient id="p0armR" x1="1" y1="0" x2="0" y2="1"><stop offset=".2" stop-color="#d4b098"/><stop offset=".55" stop-color="#bb9a82"/><stop offset=".8" stop-color="#9c846d"/></linearGradient></defs>
<rect width="750" height="500" fill="url(#p0bg)"/>
<g filter="url(#p0b8)">
<ellipse cx="150" cy="40" rx="130" ry="30" fill="#5f5230"/><ellipse cx="230" cy="110" rx="50" ry="40" fill="#77684a"/><ellipse cx="130" cy="120" rx="60" ry="22" fill="#3f351f"/>
<ellipse cx="60" cy="200" rx="40" ry="90" fill="#463b22"/><ellipse cx="210" cy="275" rx="40" ry="30" fill="#5a5033"/><ellipse cx="35" cy="300" rx="40" ry="50" fill="#4a4327"/>
<ellipse cx="640" cy="30" rx="120" ry="40" fill="#6e6144"/><ellipse cx="700" cy="170" rx="60" ry="80" fill="#6c5e3c"/><ellipse cx="560" cy="110" rx="40" ry="60" fill="#5a4e30"/>
<ellipse cx="720" cy="260" rx="40" ry="40" fill="#5e5335"/><ellipse cx="590" cy="290" rx="30" ry="25" fill="#5b5133"/><ellipse cx="700" cy="20" rx="50" ry="25" fill="#55492c"/>
</g>
<!-- raincoat -->
<g clip-path="url(#p0coat)">
<rect x="0" y="290" width="750" height="210" fill="#dfe3ef"/>
<g filter="url(#p0b8)">
<ellipse cx="190" cy="370" rx="90" ry="55" fill="#efdce6"/><ellipse cx="110" cy="440" rx="70" ry="40" fill="#ecd6df"/>
<ellipse cx="245" cy="440" rx="55" ry="70" fill="#cbe3d6"/><ellipse cx="100" cy="495" rx="110" ry="25" fill="#c4d8ec"/>
<ellipse cx="380" cy="440" rx="70" ry="80" fill="#dbe3f0"/><ellipse cx="330" cy="400" rx="30" ry="50" fill="#c9cddc"/>
<ellipse cx="555" cy="420" rx="65" ry="100" fill="#c4dfd0"/><ellipse cx="660" cy="410" rx="60" ry="65" fill="#ecd4de"/>
<ellipse cx="720" cy="480" rx="50" ry="40" fill="#dbe6f4"/><ellipse cx="470" cy="400" rx="30" ry="60" fill="#d0cfdc"/>
</g>
</g>
<!-- hood -->
<path d="M309 0 C280 35 250 85 236 140 C226 185 230 245 246 295 C262 335 300 370 350 398 L410 398 C470 370 530 335 566 292 C574 255 566 205 552 158 C536 105 508 45 472 0Z" fill="#ccd8ea"/>
<path d="M320 0 C292 40 262 90 250 145 C244 180 244 200 248 215 L262 205 C262 150 290 70 345 0Z" fill="#e4ecf6" opacity=".8"/>
<path d="M455 0 C495 50 525 110 540 165 C548 200 552 240 548 275 L530 280 C530 200 500 80 435 0Z" fill="#dfe8f4" opacity=".8"/>
<!-- face -->
<ellipse cx="385" cy="120" rx="105" ry="60" fill="#c58e6f"/>
<path d="M268 150 C262 200 268 250 288 290 C310 330 345 356 380 358 C412 356 440 335 462 300 C484 262 498 215 496 160 C490 110 450 80 385 80 C320 80 276 105 268 150Z" fill="url(#p0face)"/>
<path d="M262 215 C266 262 282 300 312 332 C334 354 356 364 380 366 C404 364 428 352 448 330 C474 300 492 258 498 205 L512 210 C508 270 486 318 456 346 C432 368 404 378 380 380 C352 378 326 366 304 344 C274 314 254 268 250 218Z" fill="#c3cbdc" opacity=".75"/>
<!-- hair -->
<path d="M350 0 C325 22 300 48 284 80 C272 105 264 135 260 165 L258 204 L270 198 C274 170 282 145 294 125 C306 108 330 92 350 85 C375 74 400 68 420 70 C440 74 456 88 464 104 C472 122 480 145 488 170 L507 178 C505 150 498 125 488 95 C474 58 448 25 412 0Z" fill="#1b1919"/>
<path d="M314 36 C350 30 400 28 436 18" stroke="#5a5040" stroke-width="4" fill="none" opacity=".55"/>
<g fill="none" stroke="#211c1a" stroke-linecap="round"><path d="M352 84 C350 110 346 135 340 158" stroke-width="4"/><path d="M366 80 C367 110 362 140 356 162" stroke-width="4"/><path d="M381 75 C383 105 380 135 373 158" stroke-width="3.500"/><path d="M396 72 C398 100 396 125 392 152" stroke-width="3"/><path d="M406 71 C412 95 425 120 452 137" stroke-width="2.500"/><path d="M302 118 C297 140 290 165 281 186" stroke-width="4"/><path d="M313 108 C308 132 302 150 297 166" stroke-width="3"/><path d="M330 96 C322 120 312 140 300 152" stroke-width="2.500"/></g>
<!-- eyes / nose / mouth -->
<ellipse cx="325" cy="190" rx="20" ry="9" fill="#7a4a38" opacity=".55"/><ellipse cx="428" cy="188" rx="20" ry="9" fill="#7a4a38" opacity=".55"/>
<ellipse cx="324" cy="191" rx="13" ry="7" fill="#e9dcd4"/><ellipse cx="429" cy="189" rx="13" ry="7" fill="#e9dcd4"/>
<circle cx="326" cy="191" r="8" fill="#2a1a14"/><circle cx="428" cy="189" r="8" fill="#2a1a14"/>
<path d="M352 262 C360 272 392 272 402 262 C398 276 356 276 352 262Z" fill="#6b3a2a" opacity=".8"/>
<ellipse cx="377" cy="255" rx="22" ry="14" fill="#d9a487" opacity=".7"/>
<path d="M340 322 C355 308 370 304 378 308 C388 304 404 308 418 320 C405 328 395 350 378 352 C360 350 350 332 340 322Z" fill="#c4414c"/>
<path d="M348 320 C360 312 398 312 412 320 C400 328 360 328 348 320Z" fill="#2a1412"/>
<path d="M350 330 C365 336 395 336 410 330 C402 346 390 352 378 352 C366 352 356 344 350 330Z" fill="#d9506a"/>
<path d="M378 356 C365 370 362 392 372 402 C384 410 398 402 400 388 C400 374 392 362 384 356 M376 402 L372 500 M390 404 L382 500" stroke="#f4f6fb" stroke-width="3.5" fill="none"/>
<!-- left hand -->
<g stroke="url(#p0hand)" stroke-linecap="round" fill="none">
<line x1="33" y1="115" x2="82" y2="198" stroke-width="23" stroke="#e6ab94"/>
<line x1="133" y1="71" x2="112" y2="175" stroke-width="28" stroke="#e8ad96"/>
<line x1="190" y1="82" x2="152" y2="176" stroke-width="28" stroke="#e5a992"/>
</g>
<path d="M68 292 L130 305 L182 298 L139 324 L69 390 L0 482 V350 L50 310Z" fill="url(#p0armL)"/>
<path d="M68 192 L100 168 L165 170 L192 150 L250 172 L252 192 L214 200 L252 205 L250 222 L214 252 L205 275 L182 298 L130 306 L68 293 C76 270 76 230 68 192Z" fill="#ebb49e"/>
<path d="M196 188 L238 196" stroke="#7a3d30" stroke-width="2" opacity=".6"/>
<!-- right hand -->
<g stroke-linecap="round" fill="none">
<line x1="566" y1="51" x2="598" y2="152" stroke-width="28" stroke="#e6ab94"/>
<line x1="617" y1="48" x2="631" y2="145" stroke-width="28" stroke="#e8ae98"/>
<line x1="725" y1="87" x2="676" y2="158" stroke-width="24" stroke="#e6ab95"/>
</g>
<path d="M566 268 L704 256 L750 292 V386 L660 330Z" fill="url(#p0armR)"/>
<path d="M586 152 L640 138 L688 152 L694 210 L704 256 L700 264 L566 270 L548 250 L520 222 L500 208 L502 190 L540 196 L500 184 L502 160 L560 150 L585 168Z" fill="#ecb7a1"/>
<!-- glasses -->
<g fill="none" stroke="#dfeaf8" stroke-width="11">
<circle cx="306.500" cy="193" r="46"/><circle cx="439" cy="189.500" r="46"/>
</g>
<path d="M350 178 H396 V188 H350Z M242 188 H262 V208 H246Z M488 180 H509 V198 H490Z" fill="#e4eefa"/>
</svg></div>
<div class="box" style="left:2235px;top:132px;width:275px;height:1260px"></div>
<div class="t " style="left:2260.0px;top:159.2px;font-size:25.5px;line-height:38px;letter-spacing:1.66px;color:#d9d9dd;font-weight:700;">Selected</div>
<div class="t " style="left:2260.0px;top:202.2px;font-size:25.5px;line-height:38px;letter-spacing:1.12px;color:#d9d9dd;font-weight:700;">Photos</div>
<svg class="ic" style="left:2262px;top:250px" width="20" height="20" viewBox="0 0 20 20" fill="none" stroke="#2563eb" stroke-width="1.600" stroke-linecap="round" stroke-linejoin="round"><polyline points="2.500 11.500 7 16 17 4"/></svg>
<div class="t " style="left:2291.5px;top:246.9px;font-size:17.5px;line-height:26px;letter-spacing:1.28px;color:#2f6bed;font-weight:400;">Select All</div>
<svg class="ic" style="left:2394px;top:249px" width="20" height="22" viewBox="0 0 20 22" fill="none" stroke="#e5475b" stroke-width="1.500" stroke-linecap="round" stroke-linejoin="round">
<path d="M2.500 6h15M7 6V4a1.200 1.200 0 0 1 1.200-1.200h3.600A1.200 1.200 0 0 1 13 4V6M4.200 6l.800 12.500a1.500 1.500 0 0 0 1.500 1.400h7a1.500 1.500 0 0 0 1.500-1.400L15.800 6M8 9.500v7M10 9.500v7M12 9.500v7"/></svg>
<div class="t " style="left:2424.0px;top:246.9px;font-size:17.5px;line-height:26px;letter-spacing:0.79px;color:#e5475b;font-weight:400;">Clear</div>
<div style="left:2260px;top:284px;width:210px;height:186px;border:3px dashed #2f2f34"></div>
<svg class="ic" style="left:2349px;top:340px" width="32" height="32" viewBox="0 0 32 32" fill="none" stroke="#2563eb" stroke-width="3.200" stroke-linecap="round"><path d="M16 2.500V29.500M2.500 16H29.500"/></svg>
<div class="t " style="left:2315.0px;top:393.4px;font-size:17.5px;line-height:26px;letter-spacing:0.26px;color:#9c9c9c;font-weight:700;">Add Photos</div>
<div style="left:2260px;top:481.500px;width:216px;height:216px;border-radius:26px;box-shadow:0 0 0 2px rgba(124,58,237,.22),0 8px 22px 8px rgba(109,40,217,.10)"></div>
<div class="card" style="left:2260px;top:481.5px"><div style="left:0;top:35px;width:210px;height:140px;overflow:hidden"><svg width="210" height="140" viewBox="0 0 750 500" preserveAspectRatio="none">
<defs>
<linearGradient id="t0bg" x1="0" x2="1" y1="0" y2="0"><stop offset="0" stop-color="#382d1b"/><stop offset=".07" stop-color="#3c311e"/><stop offset=".14" stop-color="#4e4327"/><stop offset=".4" stop-color="#594d2d"/><stop offset=".7" stop-color="#615538"/><stop offset="1" stop-color="#675b3e"/></linearGradient>
<filter id="t0b8" x="-20%" y="-20%" width="140%" height="140%"><feGaussianBlur stdDeviation="9"/></filter>
<filter id="t0b3" x="-20%" y="-20%" width="140%" height="140%"><feGaussianBlur stdDeviation="3"/></filter>
<filter id="t0b1" x="-10%" y="-10%" width="120%" height="120%"><feGaussianBlur stdDeviation="1.2"/></filter>
<radialGradient id="t0face" cx=".5" cy=".45" r=".6"><stop offset="0" stop-color="#d19c7e"/><stop offset=".7" stop-color="#c48b6b"/><stop offset="1" stop-color="#a56e4e"/></radialGradient>
<linearGradient id="t0hand" x1="0" x2="0" y1="0" y2="1"><stop offset="0" stop-color="#dca98d"/><stop offset="1" stop-color="#e3b69c"/></linearGradient>
<clipPath id="t0coat"><path d="M0 481 L69 389 L139 323 L182 300 L250 304 L565 312 L620 310 L660 330 L750 385 V500 H0Z"/></clipPath>
<linearGradient id="t0armL" x1="0" y1="0" x2="1" y2="1"><stop offset=".2" stop-color="#c7a286"/><stop offset=".55" stop-color="#a5856d"/><stop offset=".8" stop-color="#7d6a57"/></linearGradient><linearGradient id="t0armR" x1="1" y1="0" x2="0" y2="1"><stop offset=".2" stop-color="#d4b098"/><stop offset=".55" stop-color="#bb9a82"/><stop offset=".8" stop-color="#9c846d"/></linearGradient></defs>
<rect width="750" height="500" fill="url(#t0bg)"/>
<g filter="url(#t0b8)">
<ellipse cx="150" cy="40" rx="130" ry="30" fill="#5f5230"/><ellipse cx="230" cy="110" rx="50" ry="40" fill="#77684a"/><ellipse cx="130" cy="120" rx="60" ry="22" fill="#3f351f"/>
<ellipse cx="60" cy="200" rx="40" ry="90" fill="#463b22"/><ellipse cx="210" cy="275" rx="40" ry="30" fill="#5a5033"/><ellipse cx="35" cy="300" rx="40" ry="50" fill="#4a4327"/>
<ellipse cx="640" cy="30" rx="120" ry="40" fill="#6e6144"/><ellipse cx="700" cy="170" rx="60" ry="80" fill="#6c5e3c"/><ellipse cx="560" cy="110" rx="40" ry="60" fill="#5a4e30"/>
<ellipse cx="720" cy="260" rx="40" ry="40" fill="#5e5335"/><ellipse cx="590" cy="290" rx="30" ry="25" fill="#5b5133"/><ellipse cx="700" cy="20" rx="50" ry="25" fill="#55492c"/>
</g>
<!-- raincoat -->
<g clip-path="url(#t0coat)">
<rect x="0" y="290" width="750" height="210" fill="#dfe3ef"/>
<g filter="url(#t0b8)">
<ellipse cx="190" cy="370" rx="90" ry="55" fill="#efdce6"/><ellipse cx="110" cy="440" rx="70" ry="40" fill="#ecd6df"/>
<ellipse cx="245" cy="440" rx="55" ry="70" fill="#cbe3d6"/><ellipse cx="100" cy="495" rx="110" ry="25" fill="#c4d8ec"/>
<ellipse cx="380" cy="440" rx="70" ry="80" fill="#dbe3f0"/><ellipse cx="330" cy="400" rx="30" ry="50" fill="#c9cddc"/>
<ellipse cx="555" cy="420" rx="65" ry="100" fill="#c4dfd0"/><ellipse cx="660" cy="410" rx="60" ry="65" fill="#ecd4de"/>
<ellipse cx="720" cy="480" rx="50" ry="40" fill="#dbe6f4"/><ellipse cx="470" cy="400" rx="30" ry="60" fill="#d0cfdc"/>
</g>
</g>
<!-- hood -->
<path d="M309 0 C280 35 250 85 236 140 C226 185 230 245 246 295 C262 335 300 370 350 398 L410 398 C470 370 530 335 566 292 C574 255 566 205 552 158 C536 105 508 45 472 0Z" fill="#ccd8ea"/>
<path d="M320 0 C292 40 262 90 250 145 C244 180 244 200 248 215 L262 205 C262 150 290 70 345 0Z" fill="#e4ecf6" opacity=".8"/>
<path d="M455 0 C495 50 525 110 540 165 C548 200 552 240 548 275 L530 280 C530 200 500 80 435 0Z" fill="#dfe8f4" opacity=".8"/>
<!-- face -->
<ellipse cx="385" cy="120" rx="105" ry="60" fill="#c58e6f"/>
<path d="M268 150 C262 200 268 250 288 290 C310 330 345 356 380 358 C412 356 440 335 462 300 C484 262 498 215 496 160 C490 110 450 80 385 80 C320 80 276 105 268 150Z" fill="url(#t0face)"/>
<path d="M262 215 C266 262 282 300 312 332 C334 354 356 364 380 366 C404 364 428 352 448 330 C474 300 492 258 498 205 L512 210 C508 270 486 318 456 346 C432 368 404 378 380 380 C352 378 326 366 304 344 C274 314 254 268 250 218Z" fill="#c3cbdc" opacity=".75"/>
<!-- hair -->
<path d="M350 0 C325 22 300 48 284 80 C272 105 264 135 260 165 L258 204 L270 198 C274 170 282 145 294 125 C306 108 330 92 350 85 C375 74 400 68 420 70 C440 74 456 88 464 104 C472 122 480 145 488 170 L507 178 C505 150 498 125 488 95 C474 58 448 25 412 0Z" fill="#1b1919"/>
<path d="M314 36 C350 30 400 28 436 18" stroke="#5a5040" stroke-width="4" fill="none" opacity=".55"/>
<g fill="none" stroke="#211c1a" stroke-linecap="round"><path d="M352 84 C350 110 346 135 340 158" stroke-width="4"/><path d="M366 80 C367 110 362 140 356 162" stroke-width="4"/><path d="M381 75 C383 105 380 135 373 158" stroke-width="3.500"/><path d="M396 72 C398 100 396 125 392 152" stroke-width="3"/><path d="M406 71 C412 95 425 120 452 137" stroke-width="2.500"/><path d="M302 118 C297 140 290 165 281 186" stroke-width="4"/><path d="M313 108 C308 132 302 150 297 166" stroke-width="3"/><path d="M330 96 C322 120 312 140 300 152" stroke-width="2.500"/></g>
<!-- eyes / nose / mouth -->
<ellipse cx="325" cy="190" rx="20" ry="9" fill="#7a4a38" opacity=".55"/><ellipse cx="428" cy="188" rx="20" ry="9" fill="#7a4a38" opacity=".55"/>
<ellipse cx="324" cy="191" rx="13" ry="7" fill="#e9dcd4"/><ellipse cx="429" cy="189" rx="13" ry="7" fill="#e9dcd4"/>
<circle cx="326" cy="191" r="8" fill="#2a1a14"/><circle cx="428" cy="189" r="8" fill="#2a1a14"/>
<path d="M352 262 C360 272 392 272 402 262 C398 276 356 276 352 262Z" fill="#6b3a2a" opacity=".8"/>
<ellipse cx="377" cy="255" rx="22" ry="14" fill="#d9a487" opacity=".7"/>
<path d="M340 322 C355 308 370 304 378 308 C388 304 404 308 418 320 C405 328 395 350 378 352 C360 350 350 332 340 322Z" fill="#c4414c"/>
<path d="M348 320 C360 312 398 312 412 320 C400 328 360 328 348 320Z" fill="#2a1412"/>
<path d="M350 330 C365 336 395 336 410 330 C402 346 390 352 378 352 C366 352 356 344 350 330Z" fill="#d9506a"/>
<path d="M378 356 C365 370 362 392 372 402 C384 410 398 402 400 388 C400 374 392 362 384 356 M376 402 L372 500 M390 404 L382 500" stroke="#f4f6fb" stroke-width="3.5" fill="none"/>
<!-- left hand -->
<g stroke="url(#t0hand)" stroke-linecap="round" fill="none">
<line x1="33" y1="115" x2="82" y2="198" stroke-width="23" stroke="#e6ab94"/>
<line x1="133" y1="71" x2="112" y2="175" stroke-width="28" stroke="#e8ad96"/>
<line x1="190" y1="82" x2="152" y2="176" stroke-width="28" stroke="#e5a992"/>
</g>
<path d="M68 292 L130 305 L182 298 L139 324 L69 390 L0 482 V350 L50 310Z" fill="url(#t0armL)"/>
<path d="M68 192 L100 168 L165 170 L192 150 L250 172 L252 192 L214 200 L252 205 L250 222 L214 252 L205 275 L182 298 L130 306 L68 293 C76 270 76 230 68 192Z" fill="#ebb49e"/>
<path d="M196 188 L238 196" stroke="#7a3d30" stroke-width="2" opacity=".6"/>
<!-- right hand -->
<g stroke-linecap="round" fill="none">
<line x1="566" y1="51" x2="598" y2="152" stroke-width="28" stroke="#e6ab94"/>
<line x1="617" y1="48" x2="631" y2="145" stroke-width="28" stroke="#e8ae98"/>
<line x1="725" y1="87" x2="676" y2="158" stroke-width="24" stroke="#e6ab95"/>
</g>
<path d="M566 268 L704 256 L750 292 V386 L660 330Z" fill="url(#t0armR)"/>
<path d="M586 152 L640 138 L688 152 L694 210 L704 256 L700 264 L566 270 L548 250 L520 222 L500 208 L502 190 L540 196 L500 184 L502 160 L560 150 L585 168Z" fill="#ecb7a1"/>
<!-- glasses -->
<g fill="none" stroke="#dfeaf8" stroke-width="11">
<circle cx="306.500" cy="193" r="46"/><circle cx="439" cy="189.500" r="46"/>
</g>
<path d="M350 178 H396 V188 H350Z M242 188 H262 V208 H246Z M488 180 H509 V198 H490Z" fill="#e4eefa"/>
</svg></div></div>
<div class="card" style="left:2260px;top:710px"><div style="left:0;top:35px;width:210px;height:140px;overflow:hidden"><svg width="210" height="140" viewBox="0 0 750 500" preserveAspectRatio="none"><defs><filter id="t1f" x="-20%" y="-20%" width="140%" height="140%"><feGaussianBlur stdDeviation="7"/></filter><filter id="t1g" x="-20%" y="-20%" width="140%" height="140%"><feGaussianBlur stdDeviation="3"/></filter></defs><rect width="750" height="500" fill="#10191c"/><g filter="url(#t1f)"><path d="M300 0 H750 V330 L690 420 L560 250 L470 210 L400 190 L300 170Z" fill="#3f9c90"/><path d="M330 0 H700 L690 40 L640 170 L470 190 L330 150Z" fill="#9fd6cc"/><path d="M450 60 L660 30 L650 160 L480 200Z" fill="#e6f3f0"/><ellipse cx="720" cy="150" rx="40" ry="120" fill="#8fcfc4"/><ellipse cx="690" cy="110" rx="30" ry="60" fill="#e2f2ee"/><ellipse cx="395" cy="60" rx="25" ry="70" fill="#eaf6f2"/><ellipse cx="330" cy="40" rx="30" ry="50" fill="#58b8a6"/><rect x="180" y="0" width="110" height="160" fill="#2b2418"/><rect x="0" y="0" width="180" height="130" fill="#0c1524"/><ellipse cx="90" cy="70" rx="18" ry="22" fill="#8aa2c4"/><ellipse cx="25" cy="105" rx="30" ry="22" fill="#c98f62"/><ellipse cx="110" cy="140" rx="38" ry="42" fill="#94705a"/><ellipse cx="200" cy="170" rx="35" ry="35" fill="#7f7458"/><ellipse cx="230" cy="200" rx="38" ry="52" fill="#8c967f"/><ellipse cx="300" cy="190" rx="25" ry="40" fill="#5d5a48"/><ellipse cx="410" cy="205" rx="70" ry="60" fill="#9d8d6a"/><ellipse cx="430" cy="120" rx="28" ry="50" fill="#1a3a38"/><ellipse cx="500" cy="150" rx="30" ry="40" fill="#3e6f66"/><ellipse cx="610" cy="150" rx="50" ry="60" fill="#1f4a48"/><ellipse cx="550" cy="190" rx="40" ry="40" fill="#5a5a48"/><path d="M0 300 L120 280 L330 250 L520 280 L560 330 L560 500 H0Z" fill="#070a10"/><path d="M340 300 L520 280 L560 380 L540 500 H300Z" fill="#1c2e40"/><ellipse cx="95" cy="280" rx="70" ry="58" fill="#9a8440"/><ellipse cx="95" cy="285" rx="38" ry="30" fill="#231a08"/><path d="M380 150 L425 160 L330 470 L230 500 L220 480Z" fill="#8f8048"/><ellipse cx="255" cy="485" rx="60" ry="30" fill="#a8985c"/><ellipse cx="350" cy="380" rx="45" ry="40" fill="#b89e84"/><path d="M480 215 L600 230 L590 345 L510 330Z" fill="#9ea8a0"/><path d="M590 250 L690 320 L640 440 L560 360Z" fill="#141a1a"/><path d="M560 400 L750 440 V500 H540Z" fill="#a9cfc0"/><ellipse cx="725" cy="360" rx="30" ry="40" fill="#eef6ee"/><ellipse cx="160" cy="250" rx="40" ry="40" fill="#35506a"/><ellipse cx="320" cy="130" rx="20" ry="60" fill="#1d4a44"/></g></svg></div></div>
<div class="card" style="left:2260px;top:938px"><div style="left:0;top:35px;width:210px;height:140px;overflow:hidden"><svg width="210" height="140" viewBox="0 0 750 500" preserveAspectRatio="none"><defs><filter id="t2f" x="-20%" y="-20%" width="140%" height="140%"><feGaussianBlur stdDeviation="7"/></filter><filter id="t2g" x="-20%" y="-20%" width="140%" height="140%"><feGaussianBlur stdDeviation="3"/></filter></defs><rect width="750" height="500" fill="#4a90a8"/><g filter="url(#t2f)"><rect x="0" y="0" width="240" height="110" fill="#1a98d8"/><ellipse cx="80" cy="200" rx="110" ry="70" fill="#22bcc0"/><ellipse cx="60" cy="110" rx="80" ry="30" fill="#5aa8d8"/><ellipse cx="130" cy="90" rx="50" ry="30" fill="#8fb4d6"/><ellipse cx="110" cy="180" rx="50" ry="25" fill="#7fd2c8"/><ellipse cx="20" cy="180" rx="25" ry="40" fill="#c9c890"/><ellipse cx="270" cy="30" rx="35" ry="40" fill="#f2c22c"/><ellipse cx="215" cy="170" rx="50" ry="45" fill="#f6c63a"/><ellipse cx="230" cy="245" rx="55" ry="25" fill="#f4c134"/><ellipse cx="210" cy="215" rx="22" ry="18" fill="#e8502a"/><ellipse cx="170" cy="150" rx="40" ry="50" fill="#b89a78"/><ellipse cx="150" cy="270" rx="60" ry="40" fill="#7f8f70"/><ellipse cx="200" cy="320" rx="80" ry="40" fill="#a58a6c"/><ellipse cx="560" cy="40" rx="80" ry="35" fill="#f6c030"/><ellipse cx="680" cy="60" rx="70" ry="40" fill="#f2a820"/><ellipse cx="720" cy="20" rx="40" ry="25" fill="#304850"/><ellipse cx="560" cy="110" rx="70" ry="30" fill="#2a7fb0"/><ellipse cx="640" cy="110" rx="40" ry="25" fill="#1c5e8a"/><ellipse cx="720" cy="100" rx="30" ry="35" fill="#ee8a20"/><ellipse cx="600" cy="160" rx="90" ry="30" fill="#3a8a78"/><ellipse cx="700" cy="165" rx="60" ry="25" fill="#3a3a60"/><ellipse cx="560" cy="200" rx="60" ry="25" fill="#6cc8c0"/><ellipse cx="680" cy="205" rx="50" ry="22" fill="#9fd8d0"/><ellipse cx="700" cy="235" rx="55" ry="28" fill="#2a62d8"/><ellipse cx="560" cy="240" rx="50" ry="20" fill="#f0c040"/><ellipse cx="600" cy="290" rx="50" ry="35" fill="#f09a20"/><ellipse cx="680" cy="290" rx="50" ry="30" fill="#8a2c20"/><ellipse cx="730" cy="280" rx="25" ry="30" fill="#f2b020"/><ellipse cx="640" cy="370" rx="50" ry="50" fill="#8a6a5c"/><ellipse cx="690" cy="350" rx="30" ry="30" fill="#b8c8d0"/><ellipse cx="735" cy="360" rx="20" ry="45" fill="#f4b420"/><ellipse cx="700" cy="450" rx="60" ry="50" fill="#1c4a6a"/><ellipse cx="620" cy="440" rx="40" ry="60" fill="#203040"/><ellipse cx="285" cy="320" rx="32" ry="28" fill="#ee8cb4"/><ellipse cx="300" cy="345" rx="42" ry="22" fill="#8a52e0"/><ellipse cx="300" cy="285" rx="40" ry="20" fill="#2a6ae0"/></g><g filter="url(#t2g)"><path d="M285 0 H470 C490 30 500 80 495 150 L280 95 C280 60 282 30 285 0Z" fill="#2f5440"/><path d="M185 100 C240 75 360 80 450 130 C500 160 540 200 535 225 C500 235 470 215 440 195 C380 150 300 120 255 130 C225 130 195 120 185 100Z" fill="#0f1614"/><path d="M255 130 C300 120 380 150 440 195 C460 230 450 260 470 280 L400 330 C350 320 310 300 290 270 C270 240 280 230 265 215 C250 195 262 170 255 130Z" fill="#c98e74"/><ellipse cx="420" cy="200" rx="30" ry="45" fill="#d8b8a4"/><ellipse cx="470" cy="215" rx="30" ry="20" fill="#9c9c98"/><path d="M340 350 L470 245 L520 265 L360 375Z" fill="#e4e8ee"/><path d="M250 500 L300 390 L350 360 L500 265 C560 280 620 350 660 440 L690 500Z" fill="#2c3a4a"/><path d="M300 390 L350 360 L330 500 H250Z" fill="#121a20"/><path d="M0 320 C40 290 100 290 140 340 C170 380 160 450 120 500 H0Z" fill="#2a1c1a"/><path d="M90 430 C130 380 200 370 240 410 C260 450 250 480 240 500 H70Z" fill="#8cc0e8"/><ellipse cx="150" cy="420" rx="35" ry="25" fill="#1c1416"/></g></svg></div></div>
<div class="card" style="left:2260px;top:1166px"><div style="left:0;top:35px;width:210px;height:140px;overflow:hidden"><svg width="210" height="140" viewBox="0 0 750 500" preserveAspectRatio="none"><defs><filter id="t3f" x="-20%" y="-20%" width="140%" height="140%"><feGaussianBlur stdDeviation="7"/></filter><filter id="t3g" x="-20%" y="-20%" width="140%" height="140%"><feGaussianBlur stdDeviation="3"/></filter></defs><rect width="750" height="500" fill="#130d0b"/><g filter="url(#t3g)"><rect x="195" y="0" width="330" height="215" fill="#a89a98"/><rect x="195" y="185" width="320" height="40" fill="#5f6f88"/><ellipse cx="260" cy="130" rx="50" ry="50" fill="#dcd4d8"/><ellipse cx="290" cy="60" rx="40" ry="50" fill="#e0c8c0"/><ellipse cx="470" cy="130" rx="55" ry="70" fill="#3a3630"/><ellipse cx="400" cy="130" rx="25" ry="60" fill="#b08870"/><ellipse cx="480" cy="30" rx="40" ry="25" fill="#d0a890"/><ellipse cx="350" cy="90" rx="30" ry="25" fill="#5a80b8"/><rect x="75" y="0" width="70" height="180" fill="#3c4248"/><rect x="75" y="180" width="70" height="80" fill="#1c2428"/><rect x="568" y="0" width="62" height="150" fill="#4a8fb4"/><rect x="568" y="150" width="62" height="70" fill="#1f6c98"/><path d="M80 290 L180 235 L185 255 L90 320Z" fill="#8a6a68"/><rect x="175" y="295" width="230" height="35" fill="#5f7894"/><rect x="290" y="300" width="90" height="14" fill="#2a2018"/></g><g filter="url(#t3f)"><ellipse cx="30" cy="300" rx="35" ry="40" fill="#6a3426"/><ellipse cx="500" cy="270" rx="70" ry="35" fill="#6a6058"/><ellipse cx="520" cy="290" rx="45" ry="18" fill="#c0b49c"/><ellipse cx="610" cy="170" rx="25" ry="40" fill="#98887c"/><ellipse cx="660" cy="330" rx="90" ry="170" fill="#0c0a0c"/><ellipse cx="560" cy="390" rx="50" ry="18" fill="#a88a74"/><ellipse cx="215" cy="410" rx="85" ry="50" fill="#4a3418"/><ellipse cx="220" cy="370" rx="30" ry="30" fill="#16100c"/><ellipse cx="225" cy="445" rx="30" ry="18" fill="#a8a098"/><ellipse cx="300" cy="470" rx="120" ry="30" fill="#4a1c0e"/><ellipse cx="660" cy="420" rx="35" ry="60" fill="#7a6458"/><ellipse cx="700" cy="470" rx="30" ry="30" fill="#34506a"/><ellipse cx="400" cy="480" rx="25" ry="20" fill="#a89888"/><ellipse cx="450" cy="495" rx="80" ry="18" fill="#4a4c54"/></g></svg></div></div>
<div style="left:2275px;top:497px;width:48px;height:48px;border-radius:50%;background:#8759e8"></div>
<svg class="ic" style="left:2285px;top:507px" width="28" height="28" viewBox="0 0 28 28" fill="none" stroke="#fff" stroke-width="1.700" stroke-linecap="round" stroke-linejoin="round"><circle cx="14" cy="14" r="11.500"/><polyline points="8.800 14.600 12.300 18 19.300 10.300"/></svg>
<svg class="ic" style="left:2497px;top:138px" width="9" height="8" viewBox="0 0 9 8"><path d="M4.500 1 L8.500 6.500 H.500Z" fill="#2e2e31" stroke="#2e2e31" stroke-width="1" stroke-linejoin="round"/></svg>
<div style="left:2497px;top:151px;width:9px;height:1232px;border-radius:4.500px;background:#2c2c2f"></div>
<div style="left:2462px;top:1341px;width:84px;height:84px;border-radius:50%;background:#2563eb;box-shadow:0 4px 10px rgba(0,0,0,.3)"></div>
<svg class="ic" style="left:2484px;top:1364px" width="40" height="38" viewBox="0 0 40 38" fill="none" stroke="#0b0b0f" stroke-width="2.200" stroke-linecap="round" stroke-linejoin="round">
<rect x="9.500" y="10" width="27" height="23" rx="3"/><path d="M6.500 27.500a3 3 0 0 1-3-3V7a3 3 0 0 1 3-3H27a3 3 0 0 1 3 3"/><circle cx="29" cy="16.500" r="1.800"/><path d="M10 30.500 18.500 21.500 25 28l3.500-3.500 8 7"/></svg>
</div></body></html>
